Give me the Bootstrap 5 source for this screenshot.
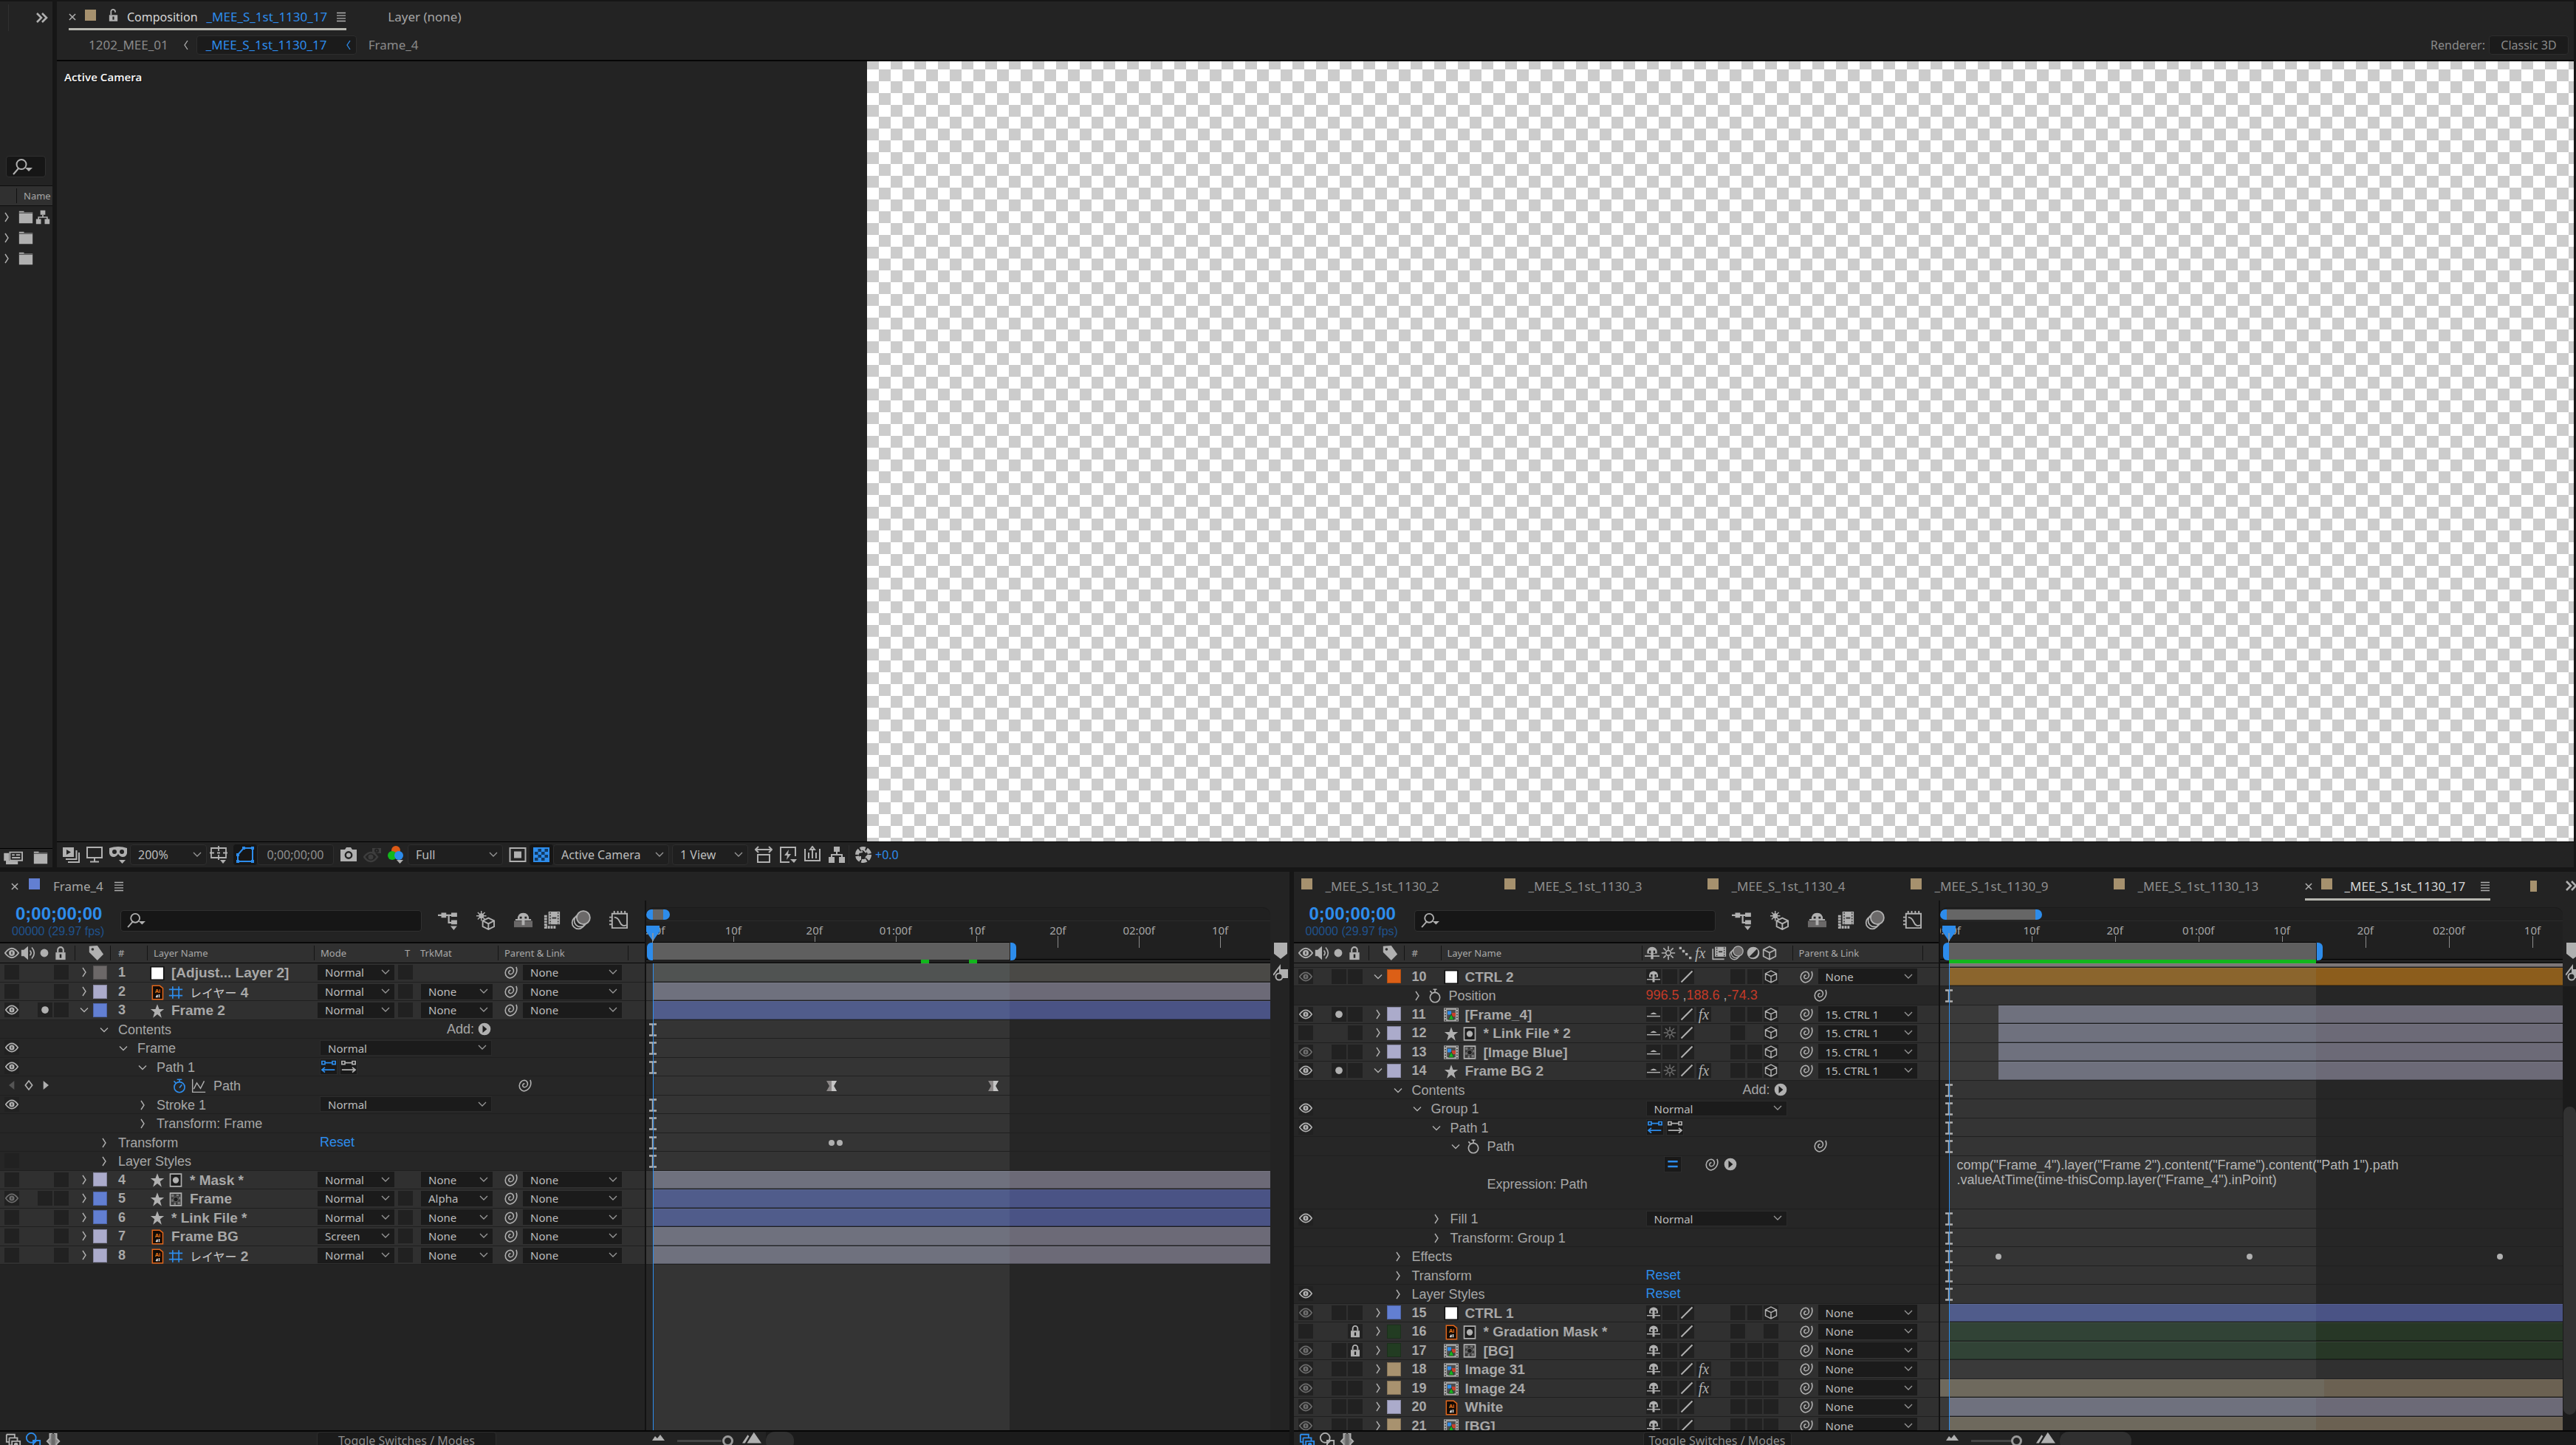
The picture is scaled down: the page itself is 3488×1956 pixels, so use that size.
<!DOCTYPE html>
<html lang="en" data-bs-theme="dark">
<head>
<meta charset="utf-8">
<meta name="viewport" content="width=device-width, initial-scale=1">
<title>Composition _MEE_S_1st_1130_17</title>
<link href="https://cdn.jsdelivr.net/npm/bootstrap@5.3.0/dist/css/bootstrap.min.css" rel="stylesheet">
<style>
:root{--ui:"Noto Sans","Noto Sans CJK JP",sans-serif;--arial:"Liberation Sans","Noto Sans CJK JP",sans-serif;--blue:#2d8ceb;--panel:#232323;--gap:#161616;--ico:#b0b0b0}
html,body{height:100%}
body{background:var(--gap);color:#a6a6a6;font:16px/20px var(--ui);overflow:hidden}
button,a{font:inherit;color:inherit;text-decoration:none;background:none;border:0;padding:0}
svg{display:block;flex:none;width:20px;height:20px;color:var(--ico);fill:none;stroke:currentColor;stroke-width:2}
.blue,.blue svg{color:var(--blue)!important}
.upper{flex:1173 1 0;min-height:0;padding-top:2px;gap:6px}
.lower{flex:777 1 0;min-height:0;gap:6px;margin-top:6px}
.pane{background:var(--panel);min-width:0;overflow:hidden}
.find{background:#161616;border:1px solid #303030;border-radius:4px;padding-left:9px}
.find input{background:none;border:0;outline:0;color:#ccc;min-width:0;font-size:15px;width:100%}
.find svg{width:26px;height:22px}
/* project strip */
.project{width:71px}
.project .ptop{height:206px;padding:4px 4px 0 11px}
.project .ptop i{width:1px;height:36px;background:#303030}
.project .find{width:54px;height:29px;margin:3px 0 11px 8px;padding-left:8px}
.project .find svg{width:28px;height:24px}
.project .find input{width:0}
.phead{height:28px;background:#303030;border-top:1px solid #0c0c0c;border-bottom:1px solid #0c0c0c;font-size:13px;padding-left:22px;white-space:nowrap}
.phead span{border-left:1px solid #111;padding-left:9px}
.prow{height:28px;gap:3px;padding-top:2px}
.prow .twl{margin-right:4px}
.pfoot{border-top:1px solid #000;height:26px;padding:0 5px;gap:14px}
.pfoot svg{width:26px}
.pfoot svg+svg{width:20px}
/* viewer */
.comp{margin-right:3px}
.ctabs{height:39px;padding-left:16px;gap:56px}
.ctabs .tabx{padding-top:6px}
.tabx{gap:12px;border-bottom:3px solid transparent;font-size:17px;white-space:nowrap}
.tabx.on{border-color:#b7b7b0;color:#d6d6d6}
.tabx .xx{width:14px;height:14px;margin:0 -2px}
.tabx .lk{width:17px;height:20px;margin:0 -2px 4px 3px}
.tabx .mn{width:14px;height:14px}
.tabx .sq{margin-bottom:6px}
.compname{font-size:16px}
.sq{width:15px;height:15px;background:#a6916e;flex:none}
.sq.bl{background:#627fd2}
.crumbs{height:40px;padding:0 7px 1px 43px;font-size:17px;color:#8a8a8a}
.boxed{background:#1b1b1b;border:1px solid #2d2d2d;border-radius:4px;height:26px}
.bc{width:38px;padding-left:18px}
.crumbs .bc svg,.cur svg{width:12px;height:16px}
.cur{width:217px;padding:0 4px 0 12px}
.rend{font-size:16px}
.rbtn{width:108px;margin-left:5px;font-size:16px}
.stage{border-top:2px solid #050505;border-bottom:1px solid #000;min-height:0}
.cam{width:32.19%;padding:11px 0 0 10px;font-size:15px;font-weight:600;color:#f0f0f0;text-shadow:1px 1px 0 #000}
.checker{background:conic-gradient(#fff 25%,#ccc 0 50%,#fff 0 75%,#ccc 0) 0 -5px/32px 32px}
.vbar{height:34px;padding-left:3px}
.vbar svg{width:24px;height:24px;margin:0 4px}
.vbar .onb{background:#161616;border-radius:4px;height:28px;width:32px}
.vsep{width:1px;height:26px;background:#2d2d2d;margin:0 3px 0 0}
.more svg{margin:0 4px 0 5px}
select{appearance:none;border:0;border-radius:0;outline:0;color:#bcbcbc;font:15px/20px var(--ui);padding:0 22px 0 10px;height:21px;background:#1b1b1b url("data:image/svg+xml,%3Csvg xmlns='http://www.w3.org/2000/svg' viewBox='0 0 12 8'%3E%3Cpath d='M1 1l5 5 5-5' fill='none' stroke='%23989898' stroke-width='1.3'/%3E%3C/svg%3E") no-repeat right 6px center/12px 8px}
.vbar select,.vbar .tbox{height:28px;border:1px solid #2e2e2e;border-radius:4px;font-size:16px;background-color:#1f1f1f}
.vbar .tbox{color:#8f8f8f}
/* timeline panels */
.tabs2{height:39px;padding-left:10px;white-space:nowrap;flex:none}
.tabs2 .tabx{height:39px;padding-top:5px}
.tabs2 .tabx .sq{margin-bottom:8px}
.tabs2 .l1{gap:14px;padding-left:5px}
.l1 .sq{margin-right:4px}
.ntab{width:275px;gap:18px;color:#8f8f8f}
.cur2{margin-left:-16px}
.cur2 .sq{margin-right:5px}
.cur2 .mn{margin-left:8px}
.half{margin:12px 0 0 54px;width:9px}
.dd{margin-right:-4px}
.thead{height:56px;padding-top:6px;flex:none}
.tc{width:163px;padding-left:16px;line-height:24px;font-family:var(--arial);flex:none}
.tc b{font-size:24px;padding-left:5px;display:block}
.tc span{color:#20528c;font-size:16px}
.thead .find{width:408px;height:29px;margin-top:7px;padding-left:8px;flex:none}
.tools{padding-left:22px}
.tools svg{width:27px;height:27px;margin-top:6px}
.tools button{margin-right:24px;height:36px}
.tools button:nth-child(3),.tools button:nth-child(4){margin-right:12px}
.tools button:last-child{margin:0}
.cols{width:875px;border-right:2px solid #121212;flex:none;min-height:0}
.rows{min-height:0;overflow:hidden}
.gridrow{display:grid;align-items:center}
.cl .gridrow{grid-template-columns:28px 22px 22px 29px 25px 23px 51px 228px 110px 28px 108px 34px 1fr}
.cr .gridrow{grid-template-columns:28px 22px 22px 29px 25px 23px 51px 274px 202px 34px 1fr}
.cl .chead{grid-template-columns:28px 22px 22px 29px 18px 30px 50px 226px 113px 31px 105px 34px 142px 1fr}
.cr .chead{grid-template-columns:28px 22px 22px 29px 18px 30px 50px 272px 204px 34px 142px 1fr}
.chead{height:29px;background:#303030;border-top:2px solid #080808;border-bottom:1px solid #080808;font-size:13px;color:#a8a8a8;flex:none}
.chead .sep{border-left:1px solid #151515;height:20px}
.chead svg{width:20px;height:20px}
.chead .tagi{width:22px;height:22px}
.chead .plink{grid-column:span 2;padding-left:8px}
.ps2{padding-left:2px}.ps4{padding-left:4px}.ps6{padding-left:6px}.ps8{padding-left:8px}.ps10{padding-left:10px}
.rw{height:25px;border-bottom:1px solid #1f1f1f;flex:none}
.rw:nth-child(odd){height:26px}
.rw.cut{height:6px!important}
.rw.tall{height:72px!important}
.rw.ly{background:#303030}
.rw.pr{background:#262626}
.cel{width:20px;height:20px;background:#212121;margin-left:1px;display:grid;place-items:center}
.gridrow>.cel:first-child,.prop .cel{margin-left:6px}
.cel svg{width:18px;height:18px}
.dimmed,.dimmed svg{color:#6c6c6c}
.lab{width:19px;height:19px;border:1px solid #0003}
.num,.nm{font:bold 19px/22px var(--arial);color:#a8a8a8}
.num{padding-left:11px;font-size:18px}
.nm{white-space:nowrap;padding:2px 0 0 3px;gap:5px}
.nm svg{width:20px;height:21px}
.nm .jp{font:16px/22px "Noto Sans CJK JP",sans-serif;color:#c8c8c8}
.swr{padding-left:3px;width:183px}
.swr .cel,.swr .nocel{width:20px;margin:0}
.fx{font:italic 20px/20px "Liberation Serif",serif;color:var(--ico)}
.prop{font:18px/22px var(--arial);white-space:nowrap}
.prop .lead0{width:101px;flex:none}
.pn{flex:none;padding-top:2px}
.cl .pn{width:327px}.cr .pn{width:373px}
.lv1{padding-left:31px}.lv2{padding-left:57px}.lv3{padding-left:83px}.lv4{padding-left:109px}.lv6{padding-left:161px}
.tw{width:28px}
.tw svg,.twl svg{width:18px;height:16px}
.tw.sm{width:23px}
.pv{flex:none}
.cl .pv{width:246px;padding:0 8px 0 5px}.cr .pv{width:202px;padding:0 7px 0 3px}
.cl .pv select{width:233px}.cr .pv select{width:191px}
.pv select{border:1px solid #2b2b2b}
.pk{padding-left:26px}
.pick{padding-left:7px}
.ptb{width:24px;height:22px;background:#191919;border:1px solid #2c2c2c;margin-right:3px;display:grid;place-items:center}
.tt{padding-left:10px}
.kf{padding-left:1px}
.kf svg{width:16px;margin-left:7px}
.swt{margin-right:9px}
.swt svg{width:20px;height:22px}
.swt:has(+.grf){margin-right:6px}
.grf{margin-right:10px}
.tall .pn{padding-top:6px}
.tall .pv{align-self:flex-start}
.eqb{margin-left:24px}.ex1{margin-left:27px}.ex2{margin-left:6px}
.red{color:#c33a28}
/* ruler and tracks */
.time{min-width:0;flex:1}
.ruler{flex:none;height:76px;background:#202020;position:relative;margin-top:9px;border-radius:10px 10px 0 0;border-top:1px solid #1b1b1b;overflow:hidden;font-size:15px}
.ruler .nav{position:absolute;left:0;top:2px;height:14px;background:#666;border:solid var(--blue);border-width:0 9px;border-radius:7px}
.ruler .rule{position:absolute;left:0;right:0;top:17px;border-top:1px solid #2a2a2a}
.tick{position:absolute;top:20px;width:60px;margin-left:-31px;text-align:center;color:#a6a6a6}
.tick::after{content:"";position:absolute;left:30px;top:18px;height:16px;width:1px;background:#8c8c8c}
.wa{position:absolute;top:46px;height:24px;background:#5f5f5f;border-top:1px solid #000}
.wa::before,.wa::after{content:"";position:absolute;top:0;height:24px;width:8px;background:var(--blue)}
.wa::before{left:-8px;border-radius:6px 0 0 6px}
.wa::after{right:-9px;border-radius:0 6px 6px 0}
.cache{position:absolute;bottom:0;height:5px;background:#12b71c}
.base{position:absolute;left:0;right:0;bottom:0;height:6px;border-top:1px solid #000;border-bottom:1px solid #000}
.trk{position:relative;min-height:0;overflow:hidden}
.trk .rw{position:relative;border-color:#202020}
.trk .rw.pr::before,.rest::before{content:"";position:absolute;top:0;bottom:0;left:var(--o);width:var(--w);background:#343434}
.trk .rw.ly::before{content:"";position:absolute;top:0;bottom:0;left:0;width:calc(var(--o) + var(--w));background:#3a3a3a}
.rest{background:#262626;position:relative}
.clip{position:absolute;top:0;bottom:0;right:0;border-bottom:1px solid #0005;border-top:1px solid #fff1}
.shade{position:absolute;top:0;bottom:0;left:var(--o);width:var(--w);background:#8ab4c41a;pointer-events:none}
.mk{position:absolute;top:5px;margin-left:-8px}
.mk svg{width:16px;height:16px}
.mk.ib{top:4px}
.ib svg{height:18px}
.needle{position:absolute;left:var(--o);top:0;bottom:0;width:1px;background:var(--blue)}
.head{position:absolute;left:var(--o);top:24px;margin-left:-9px}
.head svg{width:18px;height:21px}
.expr{position:relative;font:18px/20px var(--arial);padding:2px 0 0 23px;color:#b4b4b4;white-space:pre}
.side{flex:none;background:var(--panel);padding-top:56px}
.cl~.side{width:26px}.cr~.side{width:18px}
.side svg{width:20px;height:24px;margin:0 0 6px 4px}
.sbar{background:#1b1b1b;flex:1;padding-top:163px}
.sbar i{display:block;height:417px;background:#323232;border-radius:9px;margin-left:1px}
.foot{height:20px;border-top:2px solid #060606;flex:none}
.foot .fl{width:875px;padding:2px 0 0 7px;flex:none}
.foot svg{width:22px;height:22px}
.fi{width:81px;margin-top:-1px}
.fi button{margin-right:5px}
.foot .tog{height:24px;margin-top:-2px;font-size:16px;line-height:20px;color:#8d8d8d}
.cl2 .tog{width:243px;margin-left:341px}.cr2 .tog{width:201px;margin-left:385px}
.foot input{appearance:none;width:76px;height:14px;margin:5px 12px 0 18px;background:linear-gradient(#444,#444) 0 50%/60px 3px no-repeat}
.foot input::-webkit-slider-thumb{appearance:none;width:15px;height:15px;border:3px solid #999;border-radius:50%;background:#232323}
.m1{padding-left:6px;width:24px;margin-top:-1px}
.m2{width:32px;margin-top:-2px}
.m2 svg{width:26px}
.hbar{background:#1b1b1b}
.hbar i{display:block;height:26px;border-radius:12px;background:#303030}
.cl2 .hbar i{width:38px}.cr2 .hbar i{width:97px}
</style>
<script src="https://cdn.jsdelivr.net/npm/bootstrap@5.3.0/dist/js/bootstrap.bundle.min.js"></script>
</head>
<body class="d-flex flex-column">
<svg class="d-none">
<symbol id="eye" viewBox="0 0 24 24"><path d="M1 12q11-15 22 0q-11 15-22 0z" stroke-width="2.4"/><circle cx="12" cy="12" r="4.800" fill="currentColor" stroke="none"/><path d="M12 10v4" stroke="#222" stroke-width="1.6"/></symbol>
<symbol id="spk" viewBox="0 0 24 24"><path d="M1 7h4l7-6v22l-7-6H1z" fill="currentColor" stroke="none"/><path d="M15 8q4 4 0 8M18 3q8 9 0 18" /></symbol>
<symbol id="dot" viewBox="0 0 24 24"><circle cx="12" cy="12" r="6.500" fill="currentColor" stroke="none"/></symbol>
<symbol id="lock" viewBox="0 0 24 24"><path d="M4 11h16v12H4z" fill="currentColor" stroke="none"/><path d="M7.500 11V7a4.500 4.500 0 0 1 9 0v4" stroke-width="2.500"/><path d="M12 14v6" stroke="#222" stroke-width="3"/></symbol>
<symbol id="unlock" viewBox="0 0 24 24"><path d="M4 11h16v12H4z" fill="currentColor" stroke="none"/><path d="M7.500 11V5a4 4 0 0 1 8-1v2" stroke-width="2.500"/><path d="M12 14v6" stroke="#222" stroke-width="3"/></symbol>
<symbol id="tag" viewBox="0 0 24 24"><path d="M2 2l12-1 9 13-9 9L2 11z" fill="currentColor" stroke="none"/><circle cx="7" cy="6.500" r="2" fill="#303030" stroke="none"/></symbol>
<symbol id="cr" viewBox="0 0 18 16"><path d="M7 2l4 6-4 6" stroke-width="1.400"/></symbol>
<symbol id="cb" viewBox="0 0 12 16"><path d="M8 2L4 8l4 6" stroke-width="1.300"/></symbol>
<symbol id="cd" viewBox="0 0 18 16"><path d="M4 5.500l5 5 5-5" stroke-width="1.400"/></symbol>
<symbol id="swirl" viewBox="0 0 24 24"><path d="M12.500 9.500A2.900 2.900 0 0 0 11.500 15.200A5.600 5.600 0 0 0 12 4A8.800 8.800 0 0 0 11.500 21.500A13 13 0 0 0 21.500 3.500" stroke-width="1.900"/></symbol>
<symbol id="star" viewBox="0 0 24 24"><path d="M12 1l3 8h8l-6.500 5 2.500 9-7-5.500L5 23l2.500-9L1 9h8z" fill="currentColor" stroke="none"/></symbol>
<symbol id="nul" viewBox="0 0 24 24"><path d="M1.500 1.500h21v21h-21z" fill="#fff" stroke="#111"/></symbol>
<symbol id="ai" viewBox="0 0 24 24"><path d="M4 1h12l5 4v18H4z" fill="#120a05" stroke="#e2661a" stroke-width="1.800"/><text x="12.500" y="12" text-anchor="middle" font-size="9" font-weight="700" font-family="Liberation Sans" fill="#f07a1c" stroke="none">Ai</text><path d="M10 20l2-4v4M15 15v5" stroke="#ddd" stroke-width="1.800"/></symbol>
<symbol id="hash" viewBox="0 0 24 24"><path d="M7 2v20M17 2v20M1 7h22M1 17h22" stroke="#2d8ceb" stroke-width="2"/></symbol>
<symbol id="cmp" viewBox="0 0 24 24"><path d="M0 1h24v22H0z" fill="#a8a8a8" stroke="none"/><path d="M2.500 2v20M21.500 2v20" stroke="#333" stroke-dasharray="2 2.500"/><path d="M5 4h14v16H5z" fill="#4c4c4c" stroke="none"/><path d="M6 6h6v6H6z" fill="#2d8ceb" stroke="none"/><path d="M13 9h6v6h-6z" fill="#c8402c" stroke="none"/><path d="M12 11l4.500 9h-9z" fill="#17b21f" stroke="#222" stroke-width=".8"/></symbol>
<symbol id="mat" viewBox="0 0 24 24"><path d="M3 2h18v20H3z" fill="#1c1c1c" /><circle cx="12" cy="12" r="5" fill="currentColor" stroke="none"/></symbol>
<symbol id="mtd" viewBox="0 0 24 24"><path d="M3 2h18v20H3z" fill="#3a3a3a"/><path d="M5 4h4v4H5zM13 4h4v3h-4zM15 16h4v4h-4zM5 12h3v4H5zM9 17h3v4H9zM17 8h3v4h-3z" fill="#777" stroke="none"/><circle cx="12" cy="12" r="4" fill="#1e1e1e" stroke="#777" stroke-width="1"/></symbol>
<symbol id="shy" viewBox="0 0 24 24"><path d="M4 13V10a8 8 0 0 1 16 0v3z" fill="currentColor" stroke="none"/><path d="M7 8h3v4H7zM14 8h3v4h-3z" fill="#222" stroke="none"/><path d="M12 12v10" stroke-width="4"/><path d="M0 17h24" stroke-width="2"/></symbol>
<symbol id="shh" viewBox="0 0 24 24"><path d="M6 12q6-7 12 0z" fill="currentColor" stroke="none"/><path d="M0 15.500h24"/></symbol>
<symbol id="sun" viewBox="0 0 24 24"><circle cx="12" cy="12" r="4"/><path d="M12 1v6M12 17v6M1 12h6M17 12h6M4 4l4 4M16 16l4 4M4 20l4-4M16 8l4-4"/></symbol>
<symbol id="sl" viewBox="0 0 24 24"><path d="M2 22L22 2" stroke-width="2.600"/></symbol>
<symbol id="dots" viewBox="0 0 24 24"><path d="M2 2h4v4H2zM7 7h4v4H7zM12 12h4v4h-4zM18 18h4v4h-4z" fill="currentColor" stroke="none"/></symbol>
<symbol id="fbl" viewBox="0 0 24 24"><path d="M5 2h18v16H5z" fill="currentColor" stroke="none"/><path d="M8 3v15M20 3v15" stroke="#2a2a2a" stroke-width="1.600" stroke-dasharray="2 2"/><path d="M11 10h6" stroke="#2a2a2a"/><path d="M1.500 5v17H20"/></symbol>
<symbol id="mbl" viewBox="0 0 24 24"><circle cx="9" cy="15" r="7.500" stroke-width="1.600"/><circle cx="11.500" cy="12.500" r="7.500" stroke-width="1.600"/><circle cx="15" cy="9" r="8" fill="#6b6969" stroke-width="1.600"/></symbol>
<symbol id="adj" viewBox="0 0 24 24"><circle cx="12" cy="12" r="10" fill="currentColor" stroke="none"/><path d="M18 5.500L5.500 18A9 9 0 0 0 18 5.500z" fill="#2a2a2a" stroke="none"/></symbol>
<symbol id="cube" viewBox="0 0 24 24"><path d="M12 1.500l10 5v11l-10 5-10-5v-11zM2 6.500l10 5 10-5M12 11.500v11"/></symbol>
<symbol id="sw" viewBox="0 0 24 24"><circle cx="12" cy="14.500" r="8"/><path d="M9 1.500h6M12 1.500v5M4 4l3 3"/></symbol>
<symbol id="swb" viewBox="0 0 24 24"><circle cx="12" cy="14" r="8.500"/><path d="M8 1.500h8M12 1.500v4M3 4l3 3M12 15l4-5"/></symbol>
<symbol id="gr" viewBox="0 0 24 24"><path d="M2 1v21h21M4 17L9 7l6 9 6-12" stroke-width="1.700"/></symbol>
<symbol id="pa" viewBox="0 0 24 24"><path d="M1 3h5v5H1zM18 3h5v5h-5zM6 5.500h12M1 17h21M6 13l-5 4 5 4"/></symbol>
<symbol id="pb" viewBox="0 0 24 24"><path d="M1 3h5v5H1zM18 3h5v5h-5zM6 5.500h12M1 17h21M18 13l5 4-5 4"/></symbol>
<symbol id="pl" viewBox="0 0 24 24"><circle cx="12" cy="12" r="10" fill="currentColor" stroke="none"/><path d="M9 6l7 6-7 6z" fill="#1c1c1c" stroke="none"/></symbol>
<symbol id="eq" viewBox="0 0 24 24"><path d="M4 7.500h16M4 15.500h16" stroke-width="3"/></symbol>
<symbol id="srch" viewBox="0 0 28 24"><circle cx="12" cy="8.500" r="6.500"/><path d="M8 14l-7 8"/><path d="M17 13h10l-5 5z" fill="currentColor" stroke="none"/></symbol>
<symbol id="menu" viewBox="0 0 14 14"><path d="M1 1.500h12M1 5.200h12M1 8.900h12M1 12.500h12" stroke-width="1.300"/></symbol>
<symbol id="dbl" viewBox="0 0 20 20"><path d="M3 4l6 6-6 6M10 4l6 6-6 6" stroke-width="2.600"/></symbol>
<symbol id="x" viewBox="0 0 12 12"><path d="M2.500 2.500l7 7M9.500 2.500l-7 7" stroke-width="1.300"/></symbol>
<symbol id="fold" viewBox="0 0 24 24"><path d="M1 2h8v2h14v18H1z" fill="currentColor" stroke="none"/><path d="M1 5h22" stroke="#333" stroke-width="1.200"/></symbol>
<symbol id="flow" viewBox="0 0 24 24"><path d="M8 1h8v7H8zM1 15h8v8H1zM15 15h8v8h-8z" fill="currentColor" stroke="none"/><path d="M12 8v4M5 16v-4h14v4"/></symbol>
<symbol id="film" viewBox="0 0 28 20"><path d="M9 2h18v12H9z"/><path d="M12 6h4M18 6h6M12 10h12"/><path d="M1 4h6v10H1zM4 14v5h16v-4" fill="currentColor" stroke-width="1.400"/></symbol>
<symbol id="prev" viewBox="0 0 24 24"><path d="M1 2h15v13H1z" fill="currentColor" stroke="none"/><path d="M19.500 6v12H5M23 9v13H8"/><path d="M6 5l6 3.500L6 12z" fill="#232323" stroke="none"/></symbol>
<symbol id="mon" viewBox="0 0 24 24"><path d="M2 2h20v14H2zM12 16v5M6 21.500h12"/></symbol>
<symbol id="vr" viewBox="0 0 24 24"><path d="M0 3q12-4 24 0v7q-1 5-6 5-3 0-6-4-3 4-6 4-5 0-6-5z" fill="currentColor" stroke="none"/><circle cx="7" cy="8" r="3" fill="#232323" stroke="none"/><circle cx="17" cy="8" r="3" fill="#232323" stroke="none"/><path d="M13 19h9l-4.500 5z" fill="currentColor" stroke="none"/></symbol>
<symbol id="guide" viewBox="0 0 24 24"><path d="M2 3h20v13H2zM12 0v7M12 12v7M0 9.500h6M18 9.500h6M10 9.500h4" stroke-width="1.800"/><path d="M14 19h8l-4 5z" fill="currentColor" stroke="none"/></symbol>
<symbol id="mask" viewBox="0 0 24 24"><path d="M2 21V12l8-9h12v18z" /><path d="M0 19h4v4H0zM20 19h4v4h-4zM20 1h4v4h-4zM8 1h4v4H8zM0 10h4v4H0z" fill="currentColor" stroke="none"/></symbol>
<symbol id="camr" viewBox="0 0 24 24"><path d="M1 5h6l2-3h6l2 3h6v16H1z" fill="currentColor" stroke="none"/><circle cx="12" cy="12.500" r="4.200" stroke="#232323" stroke-width="2.400"/></symbol>
<symbol id="ghost" viewBox="0 0 24 24"><path d="M1 15q9-12 18 0q-9 12-18 0z" stroke="#3d3d3d" stroke-width="2.500"/><circle cx="10" cy="15" r="3.500" fill="#3d3d3d" stroke="none"/><path d="M12 3h12v7H12z" fill="#3d3d3d" stroke="none"/><circle cx="18" cy="6.500" r="2" stroke="#232323"/></symbol>
<symbol id="rgb" viewBox="0 0 24 24"><circle cx="12" cy="6" r="6" fill="#dd5a16" stroke="none"/><circle cx="7" cy="13" r="6" fill="#12b71c" stroke="none"/><circle cx="16" cy="13" r="6" fill="#2d8ceb" stroke="none"/><path d="M13 19h9l-4.500 5z" fill="currentColor" stroke="none"/></symbol>
<symbol id="roi" viewBox="0 0 24 24"><path d="M1.500 3h21v18h-21z"/><path d="M7 7.500h10v9H7z" fill="currentColor" stroke="none"/></symbol>
<symbol id="tg" viewBox="0 0 24 24"><path d="M2 3h20v18H2z" fill="#123a63" stroke="#2d8ceb"/><path d="M3 4h4.500v4H3zM12 4h4.500v4H12zM7.500 8H12v4H7.500zM16.500 8H21v4h-4.500zM3 12h4.500v4H3zM12 12h4.500v4H12zM7.500 16H12v4H7.500zM16.500 16H21v4h-4.500z" fill="#2d8ceb" stroke="none"/></symbol>
<symbol id="pxa" viewBox="0 0 24 24"><path d="M1 5h22M5 1L1 5l4 4M19 1l4 4-4 4M4 12h16v10H4z"/></symbol>
<symbol id="fast" viewBox="0 0 24 24"><path d="M14 22H2V2h20v12"/><path d="M13 5l-6 8h4l-1 6 6-8h-4z" fill="currentColor" stroke="none"/><path d="M15 18h9l-4 5z" fill="currentColor" stroke="none"/></symbol>
<symbol id="tml" viewBox="0 0 24 24"><path d="M2 4v16h20V4M7 9v8M12 4v13M17 9v8M9 5l3-4 3 4z"/></symbol>
<symbol id="aper" viewBox="0 0 24 24"><circle cx="12" cy="12" r="8.500" stroke-width="5" stroke-dasharray="7 1.900"/><path d="M12 5l4 4M19 12l-4 4M8 19v-5M5 9l6-1" /></symbol>
<symbol id="t1" viewBox="0 0 24 24"><path d="M0 6h16M13 6v9h4" /><path d="M16 3h7v5h-7zM16 12h7v5h-7zM15 19h8l-4 5zM4 3h6v6H4z" fill="currentColor" stroke="none"/></symbol>
<symbol id="t2" viewBox="0 0 28 28"><path d="M8 1v14M1 8h14M3 3l10 10M13 3L3 13" stroke-width="1.500"/><circle cx="8" cy="8" r="3.500" fill="currentColor" stroke="none"/><path d="M18 11l8 4v8l-8 4-8-4v-8zM10 15l8 4 8-4M18 19v8"/></symbol>
<symbol id="t3" viewBox="0 0 28 28"><path d="M1 15h26v9H1z" fill="#6a6868" stroke="none"/><path d="M6 13q0-9 8-9t8 9z" fill="currentColor" stroke="none"/><path d="M9 9h3v3H9zM16 9h3v3h-3z" fill="#232323" stroke="none"/><path d="M3 13.500h22"/><path d="M14 12v9" stroke-width="4"/></symbol>
<symbol id="t4" viewBox="0 0 28 28"><path d="M9 2h16v18H9z" fill="currentColor" stroke="none"/><path d="M11.500 3v17M22.500 3v17" stroke="#333" stroke-width="1.600" stroke-dasharray="2 2"/><path d="M14 11h6" stroke="#333"/><path d="M5 7v17h15" stroke-width="4" stroke-dasharray="3 1"/></symbol>
<symbol id="t6" viewBox="0 0 28 28"><path d="M5 5h21v20H5z"/><path d="M8 10q5 0 8 7t9 4M8 1v4M13 1v4M18 1v4M23 1v4M1 10h4M1 15h4M1 20h4"/></symbol>
<symbol id="kd" viewBox="0 0 24 24"><path d="M12 3l7 9-7 9-7-9z" stroke-width="2.500"/></symbol>
<symbol id="kl" viewBox="0 0 24 24"><path d="M17 3v18L6 12z" fill="#555" stroke="none"/></symbol>
<symbol id="kr" viewBox="0 0 24 24"><path d="M7 3v18l11-9z" fill="currentColor" stroke="none"/></symbol>
<symbol id="hg" viewBox="0 0 16 16"><path d="M1 1h14l-4 7 4 7H1l4-7z" fill="#8b8787" stroke="none"/><path d="M8 1h7l-4 7 4 7H8z" fill="#c4c4c4" stroke="none"/></symbol>
<symbol id="kdot" viewBox="0 0 16 16"><circle cx="8" cy="8" r="4" fill="currentColor" stroke="none"/></symbol>
<symbol id="ibm" viewBox="0 0 16 18"><path d="M3 1.500h10M3 16.500h10M8 1v16" stroke-width="2.500"/></symbol>
<symbol id="hd" viewBox="0 0 18 21"><path d="M0 0h18v8l-9 13L0 8z" fill="#2d8ceb" stroke="none"/><path d="M9 10v11" stroke="#999" stroke-width="1.500"/></symbol>
<symbol id="mrk" viewBox="0 0 20 24"><path d="M1 1h18v15l-9 7-9-7z" fill="currentColor" stroke="none"/></symbol>
<symbol id="cam2" viewBox="0 0 20 24"><path d="M9 7h11v12H9z" fill="currentColor" stroke="none"/><path d="M0 15L9 3v16" /><circle cx="8" cy="17" r="4.500" fill="#232323"/></symbol>
<symbol id="m1" viewBox="0 0 22 22"><path d="M2 13l4-6 3 3 4-5 6 8z" fill="currentColor" stroke="none"/></symbol>
<symbol id="m2" viewBox="0 0 28 22"><path d="M0 18L8 6l2 2-6 10zM7 18L17 2l11 16z" fill="currentColor" stroke="none"/></symbol>
<symbol id="f1" viewBox="0 0 24 24"><path d="M2 3h12v5M2 3v11h4M6 8h12v5M6 8v11h4M10 13h12v10H10z"/><circle cx="16" cy="18" r="2" fill="currentColor"/></symbol>
<symbol id="f2" viewBox="0 0 24 24"><circle cx="9" cy="8" r="7"/><path d="M12 12h10v11H12z"/><path d="M12 12h5l-5 5z" fill="currentColor"/></symbol>
<symbol id="f3" viewBox="0 0 24 24"><path d="M10 2H7v7l-4 4 4 4v7h3zM14 2h3v7l4 4-4 4v7h-3z" fill="#8a8a8a"/><path d="M9 2h6v22H9z" fill="#6b6b6b" stroke="none"/></symbol>
</svg>

<main class="upper d-flex">
 <aside class="pane project d-flex flex-column">
  <div class="ptop d-flex justify-content-between"><i></i><button aria-label="More panels" class="align-self-start mt-2"><svg><use href="#dbl"/></svg></button></div>
  <label class="find d-flex align-items-center"><svg><use href="#srch"/></svg><input type="text" aria-label="Search project"></label>
  <div class="phead d-flex align-items-center"><span>Name</span></div>
  <div class="prow d-flex align-items-center"><span class="twl"><svg><use href="#cr"/></svg></span><svg><use href="#fold"/></svg><svg><use href="#flow"/></svg></div>
  <div class="prow d-flex align-items-center"><span class="twl"><svg><use href="#cr"/></svg></span><svg><use href="#fold"/></svg></div>
  <div class="prow d-flex align-items-center"><span class="twl"><svg><use href="#cr"/></svg></span><svg><use href="#fold"/></svg></div>
  <div class="flex-fill"></div>
  <div class="pfoot d-flex align-items-center"><svg><use href="#film"/></svg><svg><use href="#fold"/></svg></div>
 </aside>

 <section class="pane comp d-flex flex-column flex-fill">
  <nav class="ctabs d-flex">
   <a href="#" class="tabx on d-flex align-items-center"><svg class="xx"><use href="#x"/></svg><span class="sq"></span><svg class="lk"><use href="#unlock"/></svg><span class="compname">Composition</span><span class="blue ms-n1">_MEE_S_1st_1130_17</span><svg class="mn"><use href="#menu"/></svg></a>
   <a href="#" class="tabx d-flex align-items-center"><span>Layer (none)</span></a>
  </nav>
  <div class="crumbs d-flex align-items-center">
   <a href="#">1202_MEE_01</a><span class="bc"><svg><use href="#cb"/></svg></span>
   <a href="#" class="boxed blue cur d-flex align-items-center justify-content-between"><span>_MEE_S_1st_1130_17</span><svg><use href="#cb"/></svg></a>
   <a href="#" class="ms-3">Frame_4</a>
   <span class="ms-auto rend">Renderer:</span><button class="boxed rbtn">Classic 3D</button>
  </div>
  <div class="stage d-flex flex-fill"><div class="cam">Active Camera</div><div class="checker flex-fill"></div></div>
  <div class="vbar d-flex align-items-center" id="vbar"></div>
 </section>
</main>

<div class="lower d-flex" id="lower"></div>

<script>
const I=(n,c='')=>`<svg class="${c}"><use href="#${n}"/></svg>`;
const S=(v,l,w)=>`<select aria-label="${l}" style="width:${w}px"><option>${v}</option></select>`;

/* viewer bar */
document.getElementById('vbar').innerHTML=
 I('prev')+I('mon')+I('vr')+
 S('200%','Magnification',104)+I('guide')+
 `<button class="onb blue ms-1" aria-label="Mask visibility">${I('mask')}</button>`+
 `<span class="tbox d-flex align-items-center justify-content-center" style="width:104px">0;00;00;00</span>`+
 I('camr','ms-2')+I('ghost')+I('rgb')+
 S('Full','Resolution',129)+I('roi','ms-2')+`<button class="onb" aria-label="Transparency grid">${I('tg')}</button>`+
 S('Active Camera','View',157)+`<span class="ms-1">${S('1 View','Layout',103)}</span>`+
 `<span class="d-flex ms-1 more">${I('pxa')}${I('fast')}${I('tml')}${I('flow')}</span><i class="vsep"></i>`+I('aper')+`<span class="blue">+0.0</span>`;

const C={gray:'#6c6868',lav:'#ababcb',blue:'#627fd2',org:'#dc5f16',grn:'#223c22',tan:'#a8926f'};
const B={gray:'#4a4946',lav:'#6c6a77',blue:'#4a5385',org:'#8c5d1c',grn:'#273726',tan:'#6b6152'};
const cel=x=>`<span class="cel">${x||''}</span>`;
const eye=e=>e===undefined?'<span></span>':`<span class="cel ${e==2?'dimmed':''}">${e?I('eye'):''}</span>`;
const nameHtml=r=>`<span class="nm d-flex align-items-center">${r.ic.map(i=>I(i)).join('')}<span class="ms-1">${r.name}</span></span>`;

function layer(r,left){
 let h=`<div class="rw ly gridrow">${eye(r.e)}<span></span>`+
  (r.s===undefined?'<span></span>':cel(r.s?I('dot'):''))+cel(r.lk?I('lock'):'')+
  `<span class="twl">${I(r.open?'cd':'cr','ms-1')}</span><span class="lab" style="background:${C[r.c]}"></span><span class="num">${r.n}</span>${nameHtml(r)}`;
 if(left) h+=`<span class="ps2">${S(r.mode,'Mode',104)}</span>`+(r.noT?'<span></span>':cel(''))+
   (r.trk?`<span class="ps4">${S(r.trk,'Track matte',97)}</span>`:'<span></span>');
 else h+=`<span class="swr d-flex justify-content-between">`+r.sw.map(s=>s=='-'?'<span class="nocel"></span>':`<span class="cel">${s=='fx'?'<em class="fx">fx</em>':s=='dsun'?`<span class="dimmed">${I('sun')}</span>`:s?I(s):''}</span>`).join('')+`</span>`;
 return h+`<span class="pick">${I('swirl')}</span><span>${S(r.par||'None','Parent',134)}</span></div>`;
}
function prop(r){
 const lead=r.kf?`<span class="d-flex kf">${I('kl')}${I('kd')}${I('kr')}</span>`:r.e===undefined?'':eye(r.e);
 const tw=r.tw===undefined?'':`<span class="tw ${r.sw?'sm':''}">${r.tw==''?'':I(r.tw)}</span>`;
 return `<div class="rw pr prop d-flex ${r.tall?'tall':'align-items-center'}"><span class="lead0">${lead}</span>`+
  `<span class="pn lv${r.lv} d-flex align-items-center">${tw}${r.sw||''}${r.name}</span><span class="pv d-flex align-items-center ${r.add?'justify-content-end':''}">${r.v||''}</span>`+
  `<span class="pk">${r.pk?I('swirl'):''}</span></div>`;
}
const ADD=`Add:<button class="ms-1" aria-label="Add content">${I('pl')}</button>`;
const PT=`<button class="ptb blue" aria-label="Path direction">${I('pa')}</button><button class="ptb" aria-label="Reverse path">${I('pb')}</button>`;
const RS='<a href="#" class="blue">Reset</a>';
const NS='<select aria-label="Blend mode"><option>Normal</option></select>';

const L=[
 {n:1,e:0,c:'gray',ic:['nul'],name:'[Adjust... Layer 2]',mode:'Normal',bar:0},
 {n:2,e:0,c:'lav',ic:['ai','hash'],name:'<span class="jp">レイヤー</span> 4',mode:'Normal',trk:'None',bar:0},
 {n:3,e:1,s:1,open:1,c:'blue',ic:['star'],name:'Frame 2',mode:'Normal',trk:'None',bar:0},
 {lv:1,tw:'cd',name:'Contents',v:ADD,add:1,ib:1},
 {lv:2,tw:'cd',name:'Frame',e:1,v:NS,ib:1},
 {lv:3,tw:'cd',name:'Path 1',e:1,v:PT,ib:1},
 {lv:4,tw:'',name:'Path',kf:1,sw:`<span class="blue swt">${I('swb')}</span>${I('gr','grf')}`,pk:1,mk:[['hg',22],['hg',42]]},
 {lv:3,tw:'cr',name:'Stroke 1',e:1,v:NS,ib:1},
 {lv:3,tw:'cr',name:'Transform: Frame',ib:1},
 {lv:1,tw:'cr',name:'Transform',v:RS,ib:1,mk:[['kdot',22],['kdot',23]]},
 {lv:1,tw:'cr',name:'Layer Styles',e:0,ib:1},
 {n:4,e:0,c:'lav',ic:['star','mat'],name:'* Mask *',mode:'Normal',noT:1,trk:'None',bar:0},
 {n:5,e:2,s:0,c:'blue',ic:['star','mtd'],name:'Frame',mode:'Normal',trk:'Alpha',bar:0},
 {n:6,e:0,c:'blue',ic:['star'],name:'* Link File *',mode:'Normal',trk:'None',bar:0},
 {n:7,e:0,c:'lav',ic:['ai'],name:'Frame BG',mode:'Screen',trk:'None',bar:0},
 {n:8,e:0,c:'lav',ic:['ai','hash'],name:'<span class="jp">レイヤー</span> 2',mode:'Normal',trk:'None',bar:0}
];
const P='15. CTRL 1', SWI=`<span class="swt">${I('sw')}</span>`;
const R=[
 {cut:1},
 {n:10,e:2,s:0,open:1,c:'org',ic:['nul'],name:'CTRL 2',sw:['shy','','sl','-','-','','','cube'],bar:0},
 {lv:2,tw:'cr',sw:SWI,name:'Position',v:'<span class="red">996.5</span>&nbsp;,<span class="red">188.6</span>&nbsp;,<span class="red">-74.3</span>',pk:1,ib:1},
 {n:11,e:1,s:1,c:'lav',ic:['cmp'],name:'[Frame_4]',sw:['shh','','sl','fx','-','','','cube'],par:P,bar:6},
 {n:12,e:0,c:'lav',ic:['star','mat'],name:'* Link File * 2',sw:['shh','dsun','sl','-','-','','-','cube'],par:P,bar:6},
 {n:13,e:2,s:0,c:'lav',ic:['cmp','mtd'],name:'[Image Blue]',sw:['shh','','sl','-','-','','','cube'],par:P,bar:6},
 {n:14,e:1,s:1,open:1,c:'lav',ic:['star'],name:'Frame BG 2',sw:['shh','dsun','sl','fx','-','','','cube'],par:P,bar:6},
 {lv:1,tw:'cd',name:'Contents',v:ADD,add:1,ib:1},
 {lv:2,tw:'cd',name:'Group 1',e:1,v:NS,ib:1},
 {lv:3,tw:'cd',name:'Path 1',e:1,v:PT,ib:1},
 {lv:4,tw:'cd',sw:SWI,name:'Path',pk:1,ib:1},
 {lv:6,tall:1,name:'Expression: Path',v:`<button class="ptb blue eqb" aria-label="Enable expression">${I('eq')}</button>${I('swirl','ex1')}<button aria-label="Expression menu" class="ex2">${I('pl')}</button>`,expr:1},
 {lv:3,tw:'cr',name:'Fill 1',e:1,v:NS,ib:1},
 {lv:3,tw:'cr',name:'Transform: Group 1',ib:1},
 {lv:1,tw:'cr',name:'Effects',ib:1,mk:[['kdot',6],['kdot',36],['kdot',66]]},
 {lv:1,tw:'cr',name:'Transform',v:RS,ib:1},
 {lv:1,tw:'cr',name:'Layer Styles',e:1,v:RS,ib:1},
 {n:15,e:2,s:0,c:'blue',ic:['nul'],name:'CTRL 1',sw:['shy','','sl','-','-','','','cube'],bar:0},
 {n:16,e:0,lk:1,c:'grn',ic:['ai','mat'],name:'* Gradation Mask *',sw:['shy','','sl','-','-','','-',''],bar:0},
 {n:17,e:2,s:0,lk:1,c:'grn',ic:['cmp','mtd'],name:'[BG]',sw:['shy','','sl','-','-','','',''],bar:0},
 {n:18,e:2,s:0,c:'tan',ic:['cmp'],name:'Image 31',sw:['shy','','sl','fx','-','','','']},
 {n:19,e:2,s:0,c:'tan',ic:['cmp'],name:'Image 24',sw:['shy','','sl','fx','-','','',''],bar:-2},
 {n:20,e:2,s:0,c:'lav',ic:['ai'],name:'White',sw:['shy','','sl','-','-','','',''],bar:0},
 {n:21,e:2,s:0,c:'tan',ic:['cmp'],name:'[BG]',sw:['shy','','sl','-','-','','',''],bar:0}
];
const EX='comp("Frame_4").layer("Frame 2").content("Frame").content("Path 1").path\n.valueAtTime(time-thisComp.layer("Frame_4").inPoint)';

function track(r,at){
 if(r.cut) return '<div class="rw cut ly"><i class="clip" style="left:var(--o);background:#7d7777"></i></div>';
 if(r.n) return `<div class="rw ly">${r.bar===undefined?'':`<i class="clip" style="left:${Math.max(0,at(r.bar))}%;background:${B[r.c]}"></i><i class="shade" style="left:${Math.max(0,at(r.bar))}%;width:${((44-r.bar)*(at(1)-at(0))).toFixed(2)}%"></i>`}</div>`;
 let h=`<div class="rw pr ${r.tall?'tall':''}">`;
 if(r.ib) h+=`<span class="mk ib" style="left:${at(0)}%">${I('ibm')}</span>`;
 (r.mk||[]).forEach(m=>h+=`<span class="mk" style="left:${at(m[1])}%">${I(m[0])}</span>`);
 if(r.expr) h+=`<div class="expr">${EX}</div>`;
 return h+'</div>';
}
function panel(o){
 const at=f=>+(o.org+f*o.per).toFixed(3), left=o.left;
 const tools={t1:'Mini-flowchart',t2:'Draft 3D',t3:'Hide shy layers',t4:'Frame blending',mbl:'Motion blur',t6:'Graph editor'};
 const heads=left?`<span class="sep ps8">Mode</span><span class="tt">T</span><span>TrkMat</span>`
  :`<span class="sep"><span class="swr d-flex justify-content-between">${['shy','sun','dots','fx','fbl','mbl','adj','cube'].map(s=>`<span class="nocel">${s=='fx'?'<em class="fx">fx</em>':I(s)}</span>`).join('')}</span></span>`;
 return `<section class="pane d-flex flex-column" style="flex:${o.flex} 1 0">
 <nav class="tabs2 d-flex">${o.tabs}</nav>
 <div class="d-flex flex-fill" style="min-height:0">
  <div class="cols ${left?'cl':'cr'} d-flex flex-column">
   <div class="thead d-flex"><div class="tc"><b class="blue">0;00;00;00</b><span>00000 (29.97 fps)</span></div>
    <label class="find d-flex align-items-center">${I('srch')}<input type="text" aria-label="Search layers"></label>
    <div class="tools d-flex">${Object.entries(tools).map(([i,t])=>`<button aria-label="${t}">${I(i)}</button>`).join('')}</div></div>
   <div class="chead gridrow"><span class="ps6">${I('eye')}</span><span>${I('spk')}</span><span>${I('dot')}</span><span>${I('lock')}</span><span class="sep"></span><span>${I('tag','tagi')}</span><span class="sep ps10">#</span><span class="ps8 sep">Layer Name</span>${heads}<span class="sep plink">Parent &amp; Link</span><span class="sep"></span></div>
   <div class="rows d-flex flex-column">${o.rows.map(r=>r.cut?'<div class="rw cut ly"></div>':r.n?layer(r,left):prop(r)).join('')}</div>
  </div>
  <div class="time d-flex flex-column" style="--o:${at(0)}%;--w:${(44*o.per).toFixed(3)}%">
   <div class="ruler"><i class="nav" style="width:${o.nav}%"></i><i class="rule"></i>
    ${['0:00f','10f','20f','01:00f','10f','20f','02:00f','10f'].map((t,i)=>`<span class="tick" style="left:${at(i*10)}%">${t}</span>`).join('')}
    <i class="base"></i><i class="wa" style="left:var(--o);width:var(--w)"></i>
    ${o.cache.map(c=>`<i class="cache" style="left:${at(c[0])}%;width:${((c[1]-c[0])*o.per).toFixed(3)}%"></i>`).join('')}
    <span class="head">${I('hd')}</span></div>
   <div class="trk flex-fill d-flex flex-column">${o.rows.map(r=>track(r,at)).join('')}<div class="rest flex-fill"></div><i class="needle"></i></div>
  </div>
  <div class="side d-flex flex-column">${I('mrk')}${I('cam2')}${left?'':'<div class="sbar"><i></i></div>'}</div>
 </div>
 <div class="foot d-flex ${left?'cl2':'cr2'}"><div class="fl d-flex"><span class="d-flex fi">${['Layer switches','Transfer controls','In and out points'].map((t,i)=>`<button aria-label="${t}" class="${i==(left?1:0)?'blue':''}">${I('f'+(i+1))}</button>`).join('')}</span><button class="boxed tog">Toggle Switches / Modes</button></div>
  <div class="d-flex flex-fill"><span class="m1">${I('m1')}</span><input type="range" aria-label="Timeline zoom" min="0" max="100" value="${left?100:90}"><span class="m2">${I('m2')}</span><div class="hbar flex-fill"><i></i></div></div></div>
 </section>`;
}
const tab=t=>`<a href="#" class="tabx ntab d-flex align-items-center"><span class="sq"></span><span>${t}</span></a>`;
document.getElementById('lower').innerHTML=
 panel({left:1,flex:1745,org:1.066,per:1.301,nav:3.8,rows:L,cache:[[33,34],[39,40]],
  tabs:`<a href="#" class="tabx l1 d-flex align-items-center">${I('x','xx')}<span class="sq bl"></span><span>Frame_4</span>${I('menu','mn')}</a>`})+
 panel({left:0,flex:1736,org:1.423,per:1.3405,nav:16.4,rows:R,cache:[[0,44]],
  tabs:['_MEE_S_1st_1130_2','_MEE_S_1st_1130_3','_MEE_S_1st_1130_4','_MEE_S_1st_1130_9','_MEE_S_1st_1130_13'].map(tab).join('')+
  `<a href="#" class="tabx on cur2 d-flex align-items-center">${I('x','xx')}<span class="sq"></span><span>_MEE_S_1st_1130_17</span>${I('menu','mn')}</a><span class="sq half"></span><button class="ms-auto dd" aria-label="More tabs">${I('dbl')}</button>`});
</script>
</body>
</html>
